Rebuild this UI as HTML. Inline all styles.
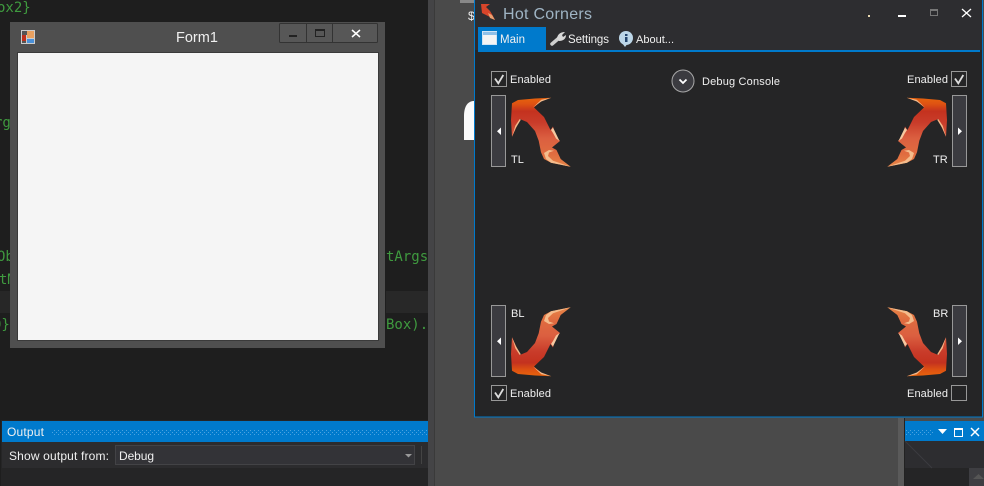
<!DOCTYPE html>
<html><head><meta charset="utf-8"><title>Hot Corners</title>
<style>
html,body{margin:0;padding:0;background:#1e1e1e;width:984px;height:486px;overflow:hidden}
svg{display:block}
text{font-family:"Liberation Sans",sans-serif;fill:#f0f0f0;font-size:11px}
.c{font-family:"DejaVu Sans Mono",monospace;font-size:14px;fill:#3f9a3f}
</style></head><body>
<svg width="984" height="486" viewBox="0 0 984 486" xmlns="http://www.w3.org/2000/svg">
<defs>
<linearGradient id="g" gradientUnits="userSpaceOnUse" x1="0" y1="97" x2="0" y2="168">
<stop offset="0" stop-color="#e8650c"/><stop offset=".1" stop-color="#de5212"/><stop offset=".2" stop-color="#c4321f"/><stop offset=".36" stop-color="#c93c2a"/><stop offset=".58" stop-color="#db5f40"/><stop offset=".8" stop-color="#e06c40"/><stop offset="1" stop-color="#e88848"/>
</linearGradient>
<g id="a">
<path d="M551.300 97.700L535 98.500L518 100L512 103.300L511 120L512 136.700L516 128L519.700 119L527 122L535 131L538.700 140.700L541 152.300L544 159L551 162.800L570.700 166.700L560.700 159L556.500 150L552 147.500L560 141L555 135L553 126.500L550.500 130L544 117L534 107.500L541.300 100.700Z" fill="url(#g)"/>
<path d="M551.300 97.700L541.300 99.800L533 107.500L541.300 101.500Z" fill="#f3b98a"/>
<path d="M512 136.700L515.300 125.700L519.700 119L520.800 119.800L515.800 128Z" fill="#f3b98a"/>
<path d="M551 130L553 127.500L559.500 141L556 138.500L553 133Z" fill="#f6c8a0"/>
<path d="M544 153L549 150L554 150.800L549 152.500L548 156L553 160.800L570.700 166.700L551 162.800L546 159Z" fill="#f4bc8c"/>
</g>
<pattern id="dots" width="4" height="4" patternUnits="userSpaceOnUse"><rect width="1" height="1" fill="#4ba3e0"/><rect x="2" y="2" width="1" height="1" fill="#4ba3e0"/></pattern>
</defs>

<!-- backgrounds -->
<rect width="984" height="486" fill="#4a4a4a"/>
<rect width="428" height="486" fill="#1e1e1e"/>
<rect x="428" width="6" height="486" fill="#444446"/>
<rect x="434" width="1" height="486" fill="#3a3a3a"/>
<rect x="898" y="418" width="6" height="68" fill="#5a5a5a"/>
<rect x="904" y="418" width="1" height="68" fill="#222"/>

<!-- code -->
<rect x="0" y="291" width="10" height="22" fill="#272727"/>
<rect x="386" y="291" width="42" height="22" fill="#282828"/>
<text class="c" x="-3" y="12">ox2}</text>
<text class="c" x="-6" y="127">rg</text>
<text class="c" x="-3" y="261">Ob</text>
<text class="c" x="386" y="261">tArgs</text>
<text class="c" x="-1" y="284">tM</text>
<text class="c" x="-7" y="329">0}</text>
<text class="c" x="386" y="329">Box).</text>

<!-- Form1 -->
<rect x="10" y="22" width="375" height="326" fill="#4f4f4f"/>
<rect x="17" y="52" width="362" height="289" fill="#3a3a3a"/>
<rect x="18" y="53" width="360" height="287" fill="#f5f5f5"/>
<rect x="21" y="30" width="14" height="14" fill="#ccc"/>
<rect x="22" y="31" width="5" height="4" fill="#555"/><rect x="27" y="31" width="7" height="7" fill="#e8a060"/><rect x="22" y="35" width="4" height="6" fill="#c0301c"/><rect x="27" y="39" width="7" height="4" fill="#4a90d8"/><rect x="22" y="41" width="4" height="2" fill="#555"/>
<text x="176" y="42" style="font-size:14.500px">Form1</text>
<rect x="279.500" y="23.500" width="98" height="19" rx="1" fill="#575757" stroke="#333"/>
<line x1="306.500" y1="23" x2="306.500" y2="43" stroke="#333"/><line x1="332.500" y1="23" x2="332.500" y2="43" stroke="#333"/>
<rect x="289" y="35" width="8" height="2" fill="#222"/>
<rect x="315.500" y="29.500" width="9" height="7" fill="none" stroke="#222"/><rect x="315" y="29" width="10" height="2" fill="#222"/>
<path d="M352 30L360 37M360 30L352 37" stroke="#fff" stroke-width="1.500"/>

<!-- Output panel -->
<rect x="1" y="420" width="427" height="66" fill="#252526"/>
<rect x="2" y="421" width="426" height="21" fill="#007acc"/>
<rect x="52" y="429" width="376" height="6" fill="url(#dots)"/>
<text x="7" y="436" style="font-size:12px" textLength="37">Output</text>
<rect x="2" y="442" width="426" height="26" fill="#2c2c2e"/>
<text x="9" y="460" style="font-size:12px" textLength="100">Show output from:</text>
<rect x="115.500" y="445.500" width="299" height="19" fill="#333337" stroke="#434346"/>
<text x="119" y="460" style="font-size:12px" textLength="35">Debug</text>
<path d="M405 454h7l-3.500 3.500z" fill="#999"/>
<rect x="421" y="446" width="1" height="18" fill="#444"/>

<!-- right bottom panel -->
<rect x="905" y="441" width="79" height="45" fill="#2d2d30"/>
<rect x="905" y="468" width="64" height="18" fill="#252526"/>
<rect x="969" y="468" width="15" height="18" fill="#3e3e42"/>
<path d="M973 479h11l-5.500-5z" fill="#555"/>
<path d="M905 441L932 468" stroke="#3c3c3f"/>
<rect x="905" y="421" width="79" height="20" fill="#007acc"/>
<rect x="906" y="429" width="27" height="6" fill="url(#dots)"/>
<path d="M938 429h9l-4.500 5z" fill="#fff"/>
<rect x="954.500" y="428.500" width="8" height="8" fill="none" stroke="#fff"/><rect x="954" y="428" width="9" height="2" fill="#fff"/>
<path d="M971 428L979 436M979 428L971 436" stroke="#fff" stroke-width="1.500"/>

<!-- stuff behind app -->
<path d="M464 140V116C464 106 468 101 474 101V140Z" fill="#fafafa"/>
<text x="468" y="20" style="font-size:12px">$</text>
<rect x="460" y="0" width="14" height="3" fill="#888"/>

<!-- App window -->
<rect x="474.500" y="-1" width="508" height="418" fill="#252526" stroke="#007acc"/>
<rect x="475" y="0" width="507" height="50" fill="#2d2d30"/>
<rect x="478" y="50" width="502" height="2" fill="#007acc"/>
<rect x="478" y="27" width="68" height="23" fill="#007acc"/>
<!-- title -->
<path d="M481 4L490 4L486 7L490 11L493 16L495 20L490 17L486 15L482 13Z" fill="#d8452a"/>
<path d="M488 13L492 15L495 20L490 18Z" fill="#eaa070"/>
<text x="503" y="19" style="font-size:16px;fill:#9fb4c4" textLength="89">Hot Corners</text>
<rect x="868" y="15" width="2" height="2" fill="#e8d8b0"/>
<rect x="898" y="15" width="8" height="2" fill="#fff"/>
<rect x="930.500" y="9.500" width="7" height="6" fill="none" stroke="#777"/><rect x="930" y="9" width="8" height="2" fill="#777"/>
<path d="M962 9L971 17M971 9L962 17" stroke="#fff" stroke-width="1.300"/>
<!-- tabs -->
<rect x="482.500" y="31.500" width="14" height="13" fill="#f4f4f4" stroke="#cfe4f5"/><rect x="483" y="32" width="14" height="3" fill="#8fc0e8"/>
<text x="500" y="43" style="font-size:11.500px" textLength="25">Main</text>
<path d="M552 44L559 38" stroke="#cfcfcf" stroke-width="3.500" stroke-linecap="round"/>
<path d="M557 39C557 35 560 32 565 32L562 35L563 37L566 35C566 39 563 41 559 41Z" fill="#d8d8d8"/>
<text x="568" y="43" style="font-size:11.500px" textLength="41">Settings</text>
<circle cx="626" cy="38" r="7" fill="#bcd6e8"/><path d="M622 43L625 47L628 43Z" fill="#bcd6e8"/>
<rect x="625" y="37" width="2.500" height="5" fill="#24456e"/><rect x="625" y="34" width="2.500" height="2" fill="#24456e"/>
<text x="636" y="43" style="font-size:11px" textLength="38">About...</text>
<!-- debug console -->
<circle cx="683" cy="81" r="11" fill="#3b3b40" stroke="#a8a8a8"/>
<path d="M679.500 79.500L683 83L686.500 79.500" fill="none" stroke="#fff" stroke-width="1.800"/>
<text x="702" y="85" textLength="78">Debug Console</text>

<!-- checkboxes -->
<g fill="none" stroke="#989898">
<rect x="491.500" y="71.500" width="15" height="15"/>
<rect x="951.500" y="71.500" width="15" height="15"/>
<rect x="491.500" y="385.500" width="15" height="15"/>
<rect x="951.500" y="385.500" width="15" height="15"/>
</g>
<g fill="none" stroke="#dcdcdc" stroke-width="1.800">
<path d="M495 78.500L498.300 83.300L503.300 75"/><path d="M955 78.500L958.300 83.300L963.300 75"/><path d="M495 392.500L498.300 397.300L503.300 389"/>
</g>
<text x="510" y="83" textLength="41">Enabled</text>
<text x="907" y="83" textLength="41">Enabled</text>
<text x="510" y="397" textLength="41">Enabled</text>
<text x="907" y="397" textLength="41">Enabled</text>

<!-- sliders -->
<g fill="#3b3b40" stroke="#989898">
<rect x="491.500" y="95.500" width="14" height="71"/>
<rect x="952.500" y="95.500" width="14" height="71"/>
<rect x="491.500" y="305.500" width="14" height="71"/>
<rect x="952.500" y="305.500" width="14" height="71"/>
</g>
<g fill="#fff">
<path d="M501 127.500V135L497 131.200Z"/><path d="M958 127.500V135L962 131.200Z"/>
<path d="M501 337.500V345L497 341.200Z"/><path d="M958 337.500V345L962 341.200Z"/>
</g>

<!-- arrows -->
<use href="#a"/>
<use href="#a" transform="matrix(-1 0 0 1 1458 0)"/>
<use href="#a" transform="matrix(1 0 0 -1 0 474)"/>
<use href="#a" transform="matrix(-1 0 0 -1 1458 474)"/>

<text x="511" y="163">TL</text>
<text x="933" y="163">TR</text>
<text x="511" y="317">BL</text>
<text x="933" y="317">BR</text>
</svg>
</body></html>
